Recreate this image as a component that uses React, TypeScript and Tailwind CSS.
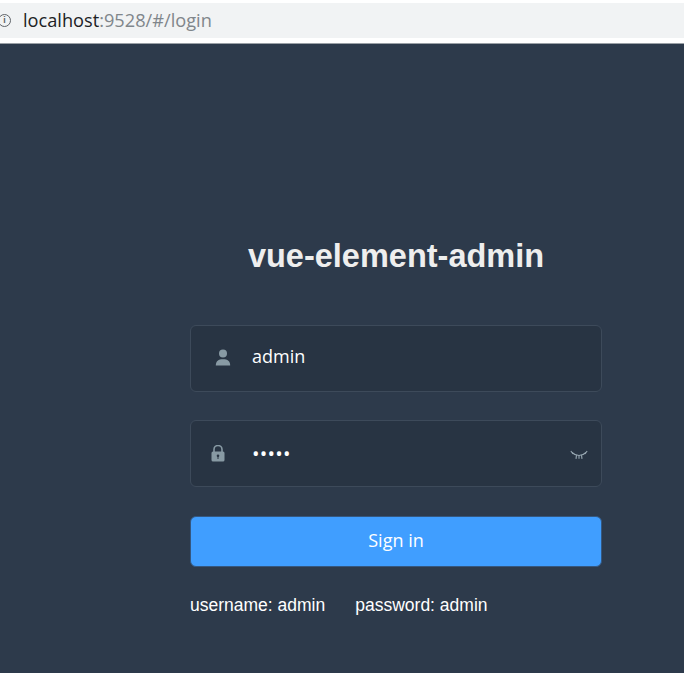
import React from 'react';

const UserIcon = () => (
  <svg width="16" height="17" viewBox="0 0 16 17" fill="#889aa4" className="ml-[3px] -mt-[2px]">
    <circle cx="8" cy="4.6" r="4" />
    <path d="M0.8 16.5c0-4.4 2.6-6.3 7.2-6.3s7.2 1.900 7.200 6.300z" />
  </svg>
);

const LockIcon = () => (
  <svg width="14" height="17" viewBox="0 0 14 17" className="-ml-[1px]">
    <path d="M3 7V4.500a4 4 0 0 1 8 0V7" fill="none" stroke="#889aa4" strokeWidth="1.600" />
    <rect x="0.500" y="6.500" width="13" height="10" rx="1.500" fill="#889aa4" />
    <circle cx="7" cy="10.700" r="1.300" fill="#283443" />
    <rect x="6.500" y="11" width="1" height="3" fill="#283443" />
  </svg>
);

const EyeOffIcon = () => (
  <svg width="18" height="10" viewBox="0 0 18 10" fill="none" stroke="#98a8b2" strokeWidth="1.100">
    <path d="M2 2.500c2 2 4.200 3 7 3s5-1 7-3" />
    <path d="M0.800 1l2.400 2.800M17.200 1l-2.400 2.800M6.500 5.200L6 8.800M11.500 5.200l.5 3.600M9 5.500v3.300" />
  </svg>
);

function Field({ icon, value, big, right }: { icon: React.ReactNode; value: string; big?: boolean; right?: React.ReactNode }) {
  return (
    <div className="flex items-center h-[67px] rounded-[6px] border border-[#3d4a5a] bg-[#283443]">
      <span className="w-[61px] pl-[21px] flex items-center">{icon}</span>
      <span className={big ? 'flex-1 text-[20px] text-white tracking-[0.2px]' : 'flex-1 text-[18px] text-white -mt-[5px]'}>{value}</span>
      {right}
    </div>
  );
}

export default function App() {
  return (
    <div className="w-[684px] h-[673px] overflow-hidden bg-white font-['Liberation_Sans',sans-serif]">
      {/* Browser address bar */}
      <div className="pt-[3px] border-b border-[#9aa0a6] h-[44px]">
        <div className="flex items-center h-[35px] bg-[#f1f3f4]">
          <span className="flex items-center justify-center w-[13px] h-[13px] -ml-[2px] rounded-full border-[1.500px] border-[#5f6368] text-[9px] font-bold text-[#5f6368] leading-none">i</span>
          <div className="ml-[12px] text-[18.2px] font-['Open_Sans',sans-serif] text-[#80868b]">
            <span className="text-[#202124]">localhost</span>:9528/#/login
          </div>
        </div>
      </div>

      {/* Login page */}
      <div className="h-[629px] bg-[#2d3a4b] pt-[191px] pl-[190px]">
        <div className="w-[412px]">
          <h3 className="h-[43px] text-center text-[32.5px] leading-[43px] font-bold text-[#eeeeee]">vue-element-admin</h3>
          <div className="mt-[47px] flex flex-col gap-[28px] font-['Open_Sans',sans-serif]">
            <Field icon={<UserIcon />} value="admin" />
            <Field
              icon={<LockIcon />}
              value="•••••"
              big
              right={<span className="mr-[13px] mt-[3px] flex"><EyeOffIcon /></span>}
            />
          </div>
          <button className="mt-[29px] w-full h-[51px] pb-[2px] rounded-[6px] bg-[#409eff] border border-[#35577f] text-white text-[18px] font-['Open_Sans',sans-serif]">
            Sign in
          </button>
          <div className="mt-[27px] flex gap-[30px] text-[17.5px] leading-[22px] text-white">
            <span>username: admin</span>
            <span>password: admin</span>
          </div>
        </div>
      </div>
    </div>
  );
}
